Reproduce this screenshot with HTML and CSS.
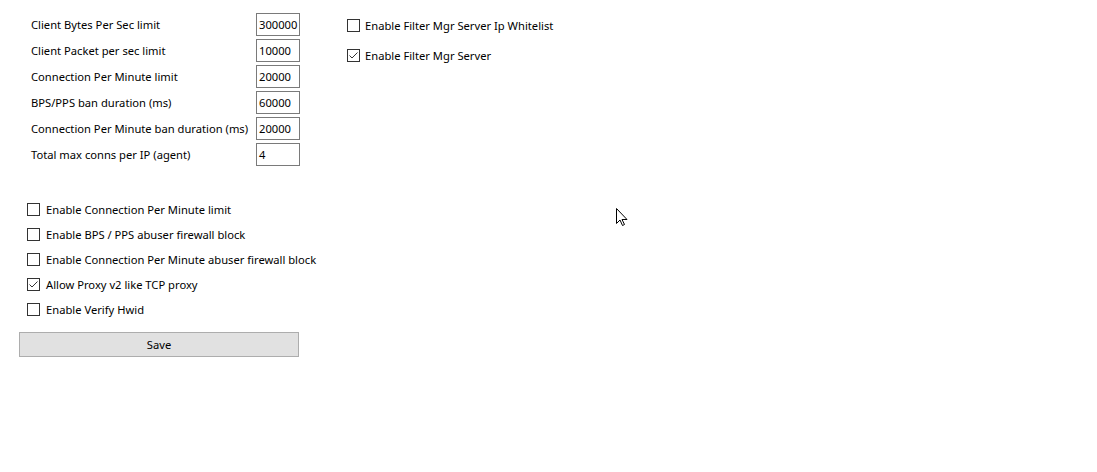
FILE: index.html
```html
<!DOCTYPE html>
<html>
<head>
<meta charset="utf-8">
<link rel="stylesheet" href="styles.css">
</head>
<body>
<div class="page">
  <div class="left">
    <div class="fields">
      <div class="field"><span class="label">Client Bytes Per Sec limit</span><span class="input">300000</span></div>
      <div class="field"><span class="label">Client Packet per sec limit</span><span class="input">10000</span></div>
      <div class="field"><span class="label">Connection Per Minute limit</span><span class="input">20000</span></div>
      <div class="field"><span class="label">BPS/PPS ban duration (ms)</span><span class="input">60000</span></div>
      <div class="field"><span class="label">Connection Per Minute ban duration (ms)</span><span class="input">20000</span></div>
      <div class="field"><span class="label">Total max conns per IP (agent)</span><span class="input">4</span></div>
    </div>
    <div class="checks">
      <div class="check"><span class="box"></span><span>Enable Connection Per Minute limit</span></div>
      <div class="check"><span class="box"></span><span>Enable BPS / PPS abuser firewall block</span></div>
      <div class="check"><span class="box"></span><span>Enable Connection Per Minute abuser firewall block</span></div>
      <div class="check"><span class="box checked"><svg viewBox="0 0 13 13" width="13" height="13"><path d="M2.5 6.5 L5 9 L10.5 3.5" fill="none" stroke="#333" stroke-width="1"/></svg></span><span>Allow Proxy v2 like TCP proxy</span></div>
      <div class="check"><span class="box"></span><span>Enable Verify Hwid</span></div>
    </div>
    <div class="save">Save</div>
  </div>
  <div class="right">
    <div class="check"><span class="box"></span><span>Enable Filter Mgr Server Ip Whitelist</span></div>
    <div class="check"><span class="box checked"><svg viewBox="0 0 13 13" width="13" height="13"><path d="M2.5 6.5 L5 9 L10.5 3.5" fill="none" stroke="#333" stroke-width="1"/></svg></span><span>Enable Filter Mgr Server</span></div>
  </div>
</div>
<svg class="cursor" width="12" height="19" viewBox="0 0 12 19"><path d="M0.5 0.5 L0.5 15.5 L4 12 L6.5 17.5 L8.5 16.5 L6 11.5 L11 11.5 Z" fill="#fff" stroke="#000" stroke-width="1"/></svg>
</body>
</html>
```

FILE: styles.css
```css
html, body {
  margin: 0;
  padding: 0;
  background: #fff;
}
body {
  font-family: "Noto Sans", "Open Sans", sans-serif;
  font-size: 11.2px;
  color: #000;
  width: 1097px;
  height: 472px;
  overflow: hidden;
  position: relative;
}
.page {
  display: flex;
  align-items: flex-start;
}
.left {
  display: flex;
  flex-direction: column;
  margin-left: 19px;
  width: 280px;
  padding-top: 13px;
}
.fields {
  display: flex;
  flex-direction: column;
  gap: 3px;
}
.field {
  display: flex;
  align-items: center;
  height: 23px;
  padding-left: 12px;
}
.label {
  flex: 1;
  min-width: 0;
  white-space: nowrap;
}
.input {
  flex: none;
  box-sizing: border-box;
  width: 44px;
  height: 23px;
  margin-right: -1px;
  border: 1px solid #7a7a7a;
  padding: 2px 0 0 2px;
  line-height: 17px;
  color: #000;
}
.checks {
  display: flex;
  flex-direction: column;
  margin-top: 31px;
  padding-left: 8px;
}
.check {
  display: flex;
  align-items: center;
  height: 25px;
  gap: 6px;
  white-space: nowrap;
}
.box {
  box-sizing: border-box;
  width: 13px;
  height: 13px;
  border: 1px solid #333;
  background: #fff;
  flex: none;
  position: relative;
}
.box svg {
  position: absolute;
  left: -1px;
  top: -1px;
}
.save {
  box-sizing: border-box;
  margin-top: 10px;
  width: 280px;
  height: 25px;
  background: #e1e1e1;
  border: 1px solid #adadad;
  display: flex;
  align-items: center;
  justify-content: center;
}
.right {
  display: flex;
  flex-direction: column;
  margin-left: 48px;
  padding-top: 13px;
  gap: 5px;
}
.right .check {
  gap: 5px;
}
.cursor {
  position: absolute;
  left: 616px;
  top: 208px;
}
```
